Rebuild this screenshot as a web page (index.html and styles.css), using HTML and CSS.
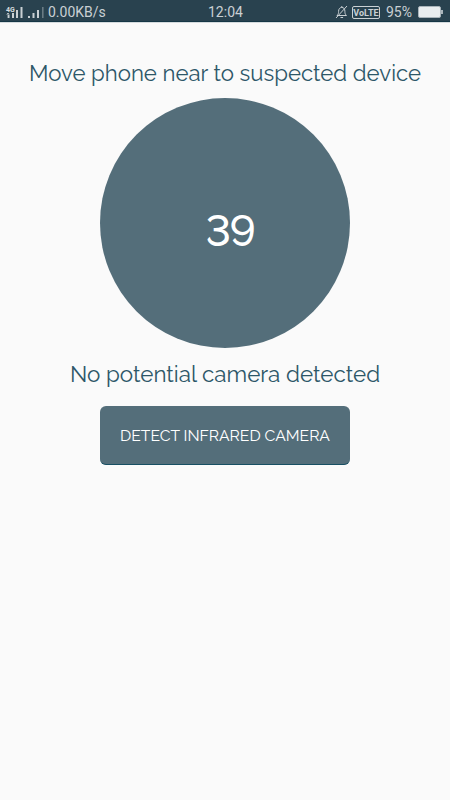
FILE: index.html
```html
<!DOCTYPE html>
<html lang="en">
<head>
<meta charset="utf-8">
<title>Camera detector</title>
<link rel="stylesheet" href="styles.css">
</head>
<body>
<header class="status">
  <svg class="signals" width="40" height="23" viewBox="0 0 40 23">
    <g class="bars"><path d="M8 14h1.5v3H8zM12 12h2v5h-2zM16 9h2v8h-2zM20.5 6h2v11h-2z"/><path d="M28 15h2v2h-2zM32.5 12h2v5h-2zM37 9h2v8h-2z"/></g>
    <text class="network" x="6" y="10.5">4G</text>
    <path class="arrows" d="M8 12v5M6.8 13.5L8 12l1.2 1.5"/>
  </svg>
  <svg class="last-bar" width="3" height="23"><path d="M1 6h1.6v11H1z"/></svg>
  <span class="speed">0.00KB/s</span>
  <time class="clock">12:04</time>
  <div class="right">
    <svg class="bell" width="13" height="14" viewBox="0 0 13 14"><path d="M2 10.5h9.5c-1.4-1.3-1.6-2.3-1.6-4.2 0-2.3-1-3.7-3.1-3.9-2.1.2-3.2 1.6-3.2 3.9 0 1.9-.2 2.9-1.6 4.2zM6.8 2.2V1M5.5 12.5h2.6M1 13L12 1"/></svg>
    <span class="volte">VoLTE</span>
    <span class="percent">95%</span>
    <span class="battery"></span>
  </div>
</header>
<main class="screen">
  <h1 class="message hint">Move phone near to suspected device</h1>
  <div class="meter"><span class="reading">39</span></div>
  <p class="message result">No potential camera detected</p>
  <button class="detect" type="button"><span>DETECT INFRARED CAMERA</span></button>
</main>
</body>
</html>
```
FILE: styles.css
```css
* { box-sizing: border-box; }
body {
  margin: 0;
  height: 800px;
  background: #fafafa;
  font-family: Raleway, Lato, sans-serif;
  overflow: hidden;
}
.status {
  display: grid;
  grid-template-columns: 40px 8px 155px 1fr auto;
  align-items: center;
  height: 22px;
  padding-right: 9px;
  background: #29424f;
  box-shadow: inset 0 -1px #163746, 0 1px #d5dbde;
  color: #c9d0d4;
  font: 14px/24px Roboto, sans-serif;
}
.bars, .last-bar { fill: #c9d0d4; }
.last-bar { margin-left: 1px; opacity: .4; }
.network { font: bold 7px Roboto, sans-serif; fill: #d5dcdf; }
.arrows { fill: none; stroke: #c9d0d4; stroke-width: .8; }
.signals, .last-bar, .bell { display: block; }
.clock { padding-left: 5px; }
.right { display: flex; align-items: center; }
.bell { margin-right: 4px; fill: none; stroke: #c9d0d4; stroke-width: 1; }
.volte {
  width: 28px;
  height: 13px;
  margin-right: 6px;
  border: 1px solid #c9d0d4;
  border-radius: 2px;
  font: bold 9px/12px Roboto, sans-serif;
  text-align: center;
}
.percent { width: 32px; line-height: 22px; }
.battery {
  position: relative;
  width: 23px;
  height: 12px;
  border: 1px solid #a9b4ba;
  border-radius: 2px;
  background: #e9edef;
}
.battery::after {
  content: "";
  position: absolute;
  left: 22px;
  top: 3px;
  width: 2px;
  height: 4px;
  background: #a9b4ba;
}
.screen { display: flex; flex-direction: column; align-items: center; padding-top: 36px; }
.message {
  margin: 0;
  height: 30px;
  color: #2d5768;
  font-weight: 400;
  line-height: 30px;
  white-space: nowrap;
}
.hint { font-size: 22.2px; }
.result { margin-top: 11px; font-size: 22.4px; }
.meter {
  display: flex;
  align-items: center;
  justify-content: center;
  width: 250px;
  height: 250px;
  margin-top: 10px;
  border-radius: 50%;
  background: #546e7a;
}
.reading {
  padding: 15px 0 0 10px;
  color: #fff;
  font-size: 43.5px;
  font-weight: 500;
  font-variant-numeric: lining-nums;
  letter-spacing: -1.5px;
  line-height: 52px;
}
.detect {
  width: 250px;
  height: 59px;
  margin-top: 17px;
  padding: 2px 0 0;
  border: 0;
  border-bottom: 1px solid #174f63;
  border-radius: 6px;
  background: #546e7a;
  color: #fff;
  font: 400 15.7px/20px Raleway, Lato, sans-serif;
  white-space: nowrap;
}
```
